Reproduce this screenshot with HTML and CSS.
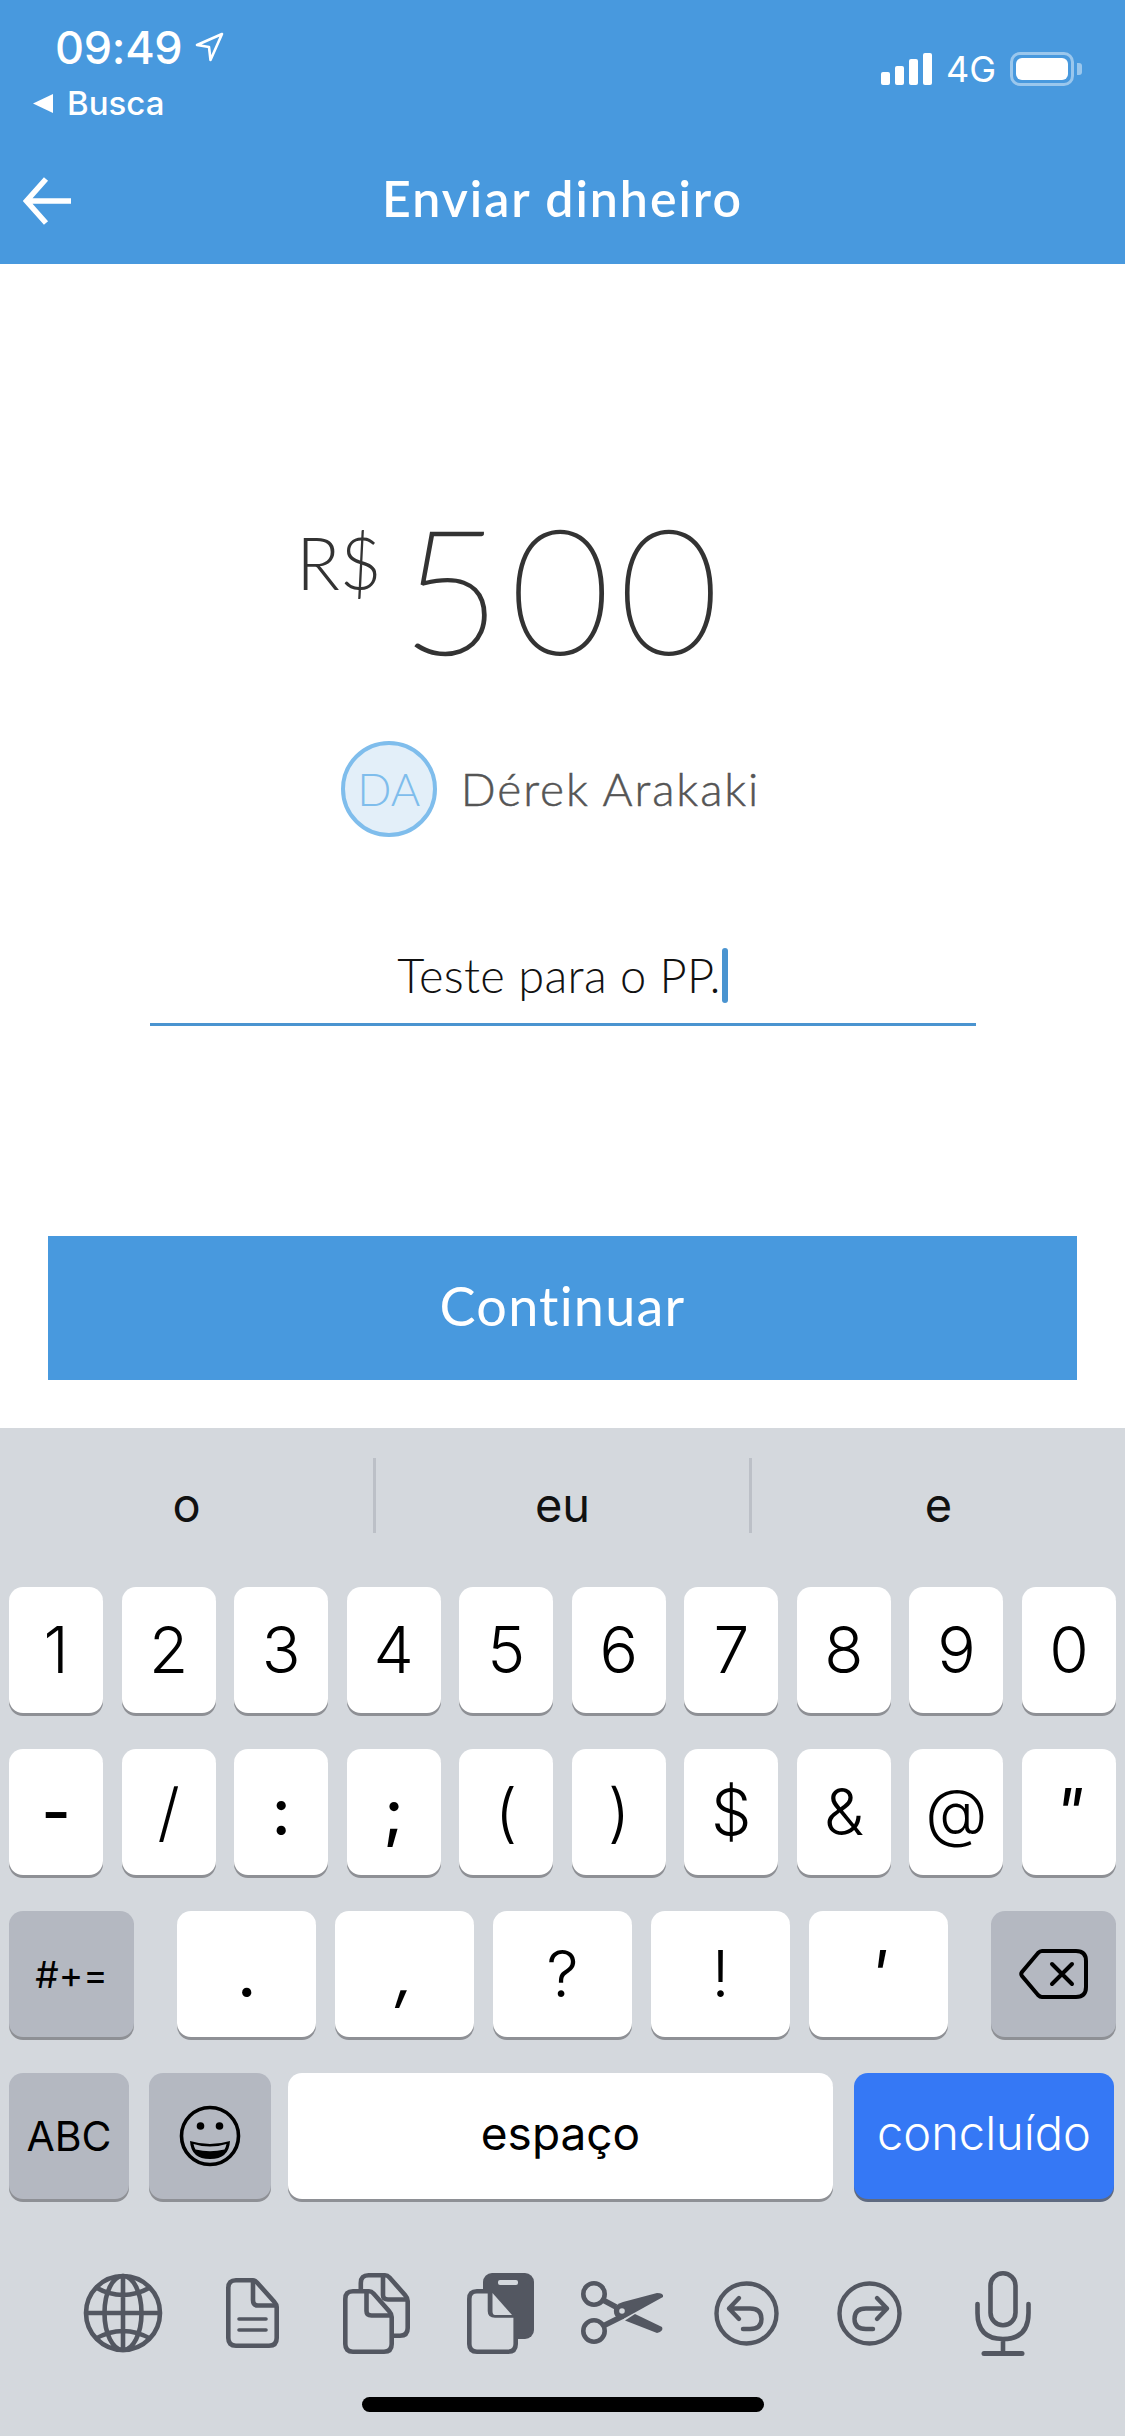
FILE: index.html
```html
<!DOCTYPE html>
<html lang="pt-BR">
<head>
    <meta charset="UTF-8">
    <meta name="viewport" content="width=device-width, initial-scale=1.0">
    <title>Enviar dinheiro</title>
    <link rel="stylesheet" href="styles.css">
</head>
<body>

    <header class="top">
        <div class="status">
            <div class="status-left">
                <div class="clock">
                    <span>09:49</span>
                    <svg class="loc" width="30" height="31" viewBox="0 0 30 31"><path d="M28 2 L3 13 L15 15 L16.5 28 Z" fill="none" stroke="#fff" stroke-width="2.6" stroke-linejoin="round"/></svg>
                </div>
                <div class="back-app">
                    <svg width="22" height="21" viewBox="0 0 22 21"><path d="M21 1 V20 L1 10.5 Z" fill="#fff"/></svg>
                    <span>Busca</span>
                </div>
            </div>
            <div class="status-right">
                <div class="signal"><i class="b1"></i><i class="b2"></i><i class="b3"></i><i class="b4"></i></div>
                <span class="net">4G</span>
                <div class="battery"><div class="battery-level"></div></div>
                <div class="battery-tip"></div>
            </div>
        </div>
        <div class="nav">
            <svg class="nav-back" width="50" height="50" viewBox="0 0 50 50"><path d="M23 3 L3.5 25 L23 47 M3.5 25 H48" fill="none" stroke="#fff" stroke-width="5.5"/></svg>
            <h1>Enviar dinheiro</h1>
        </div>
    </header>

    <main class="send">
        <div class="amount">
            <span class="currency">R$</span>
            <span class="value">500</span>
        </div>
        <div class="person">
            <div class="avatar">DA</div>
            <span class="name">Dérek Arakaki</span>
        </div>
        <div class="message">
            <span>Teste para o PP.</span><i class="caret"></i>
        </div>
        <button class="continue">Continuar</button>
    </main>

    <section class="keyboard">
        <div class="suggestions">
            <span>o</span>
            <span>eu</span>
            <span>e</span>
        </div>

        <div class="row row-ten">
            <div class="key">1</div><div class="key">2</div><div class="key">3</div><div class="key">4</div><div class="key">5</div>
            <div class="key">6</div><div class="key">7</div><div class="key">8</div><div class="key">9</div><div class="key">0</div>
        </div>
        <div class="row row-ten">
            <div class="key heavy">-</div><div class="key">/</div><div class="key heavy">:</div><div class="key heavy">;</div><div class="key">(</div>
            <div class="key">)</div><div class="key">$</div><div class="key">&amp;</div><div class="key">@</div><div class="key slant">"</div>
        </div>
        <div class="row row-mid">
            <div class="key dark small sym">#+=</div>
            <div class="punct">
                <div class="key heavy">.</div><div class="key slant">,</div><div class="key">?</div><div class="key">!</div><div class="key slant">'</div>
            </div>
            <div class="key dark del">
                <svg width="70" height="52" viewBox="0 0 70 52"><path d="M23 3 H57 Q67 3 67 13 V39 Q67 49 57 49 H23 Q21 49 19 47 L3 28 Q1.5 26 3 24 L19 5 Q21 3 23 3 Z" fill="none" stroke="#000" stroke-width="4"/><path d="M33 16 L53 36 M53 16 L33 36" stroke="#000" stroke-width="4" stroke-linecap="round"/></svg>
            </div>
        </div>
        <div class="row row-bottom">
            <div class="key dark small abc">ABC</div>
            <div class="key dark emoji">
                <svg width="62" height="62" viewBox="0 0 62 62"><circle cx="31" cy="31" r="28.5" fill="none" stroke="#000" stroke-width="3.6"/><circle cx="21.5" cy="21" r="3.8"/><circle cx="40.5" cy="21" r="3.8"/><path d="M11 36 Q31 42 51 36 Q50 54 31 54 Q12 54 11 36 Z"/><path d="M14.5 39 Q31 44 47.5 39 Q47 42 45.5 44.5 Q31 48 16.5 44.5 Q15 42 14.5 39 Z" fill="#b4b8c1"/></svg>
            </div>
            <div class="key space">espaço</div>
            <div class="key done">concluído</div>
        </div>

        <div class="tools">
            <svg class="t-globe" width="80" height="80" viewBox="0 0 80 80" fill="none" stroke="#535761" stroke-width="4.6">
                <circle cx="40" cy="40" r="37"/><ellipse cx="40" cy="40" rx="18.5" ry="37"/><path d="M40 3 V77 M3 40 H77 M12 14 Q40 30 68 14 M12 66 Q40 50 68 66"/>
            </svg>
            <svg class="t-doc" width="53" height="70" viewBox="0 0 53 70" fill="none" stroke="#535761" stroke-width="4.6">
                <path d="M10 2.3 H27 Q29 2.3 31 4.5 L48 23.5 Q50.7 26.5 50.7 29 V60 Q50.7 67.7 43 67.7 H10 Q2.3 67.7 2.3 60 V10 Q2.3 2.3 10 2.3 Z"/><path d="M27 2.3 V22 Q27 27.5 32 27.5 H50.7"/>
                <path d="M13 41 H40 M13 52 H40" stroke-width="3.6" stroke-linecap="round"/>
            </svg>
            <svg class="t-copy" width="67" height="81" viewBox="0 0 67 81" fill="none" stroke="#535761" stroke-width="4.6">
                <path d="M25.5 2.3 H42 Q44.5 2.3 46.5 4.5 L62 22 Q64.7 25 64.7 28 V55 Q64.7 62.7 57 62.7 H25.5 Q17.8 62.7 17.8 55 V10 Q17.8 2.3 25.5 2.3 Z" fill="#d4d8dd"/><path d="M40 2.3 V22 Q40 26.5 45 26.5 H64.7"/>
                <path d="M10 18.3 H26 Q28.5 18.3 30.5 20.5 L46 38 Q48.7 41 48.7 44 V71 Q48.7 78.7 41 78.7 H10 Q2.3 78.7 2.3 71 V26 Q2.3 18.3 10 18.3 Z" fill="#d4d8dd"/><path d="M23.5 18.3 V38 Q23.5 42.5 28.5 42.5 H48.7"/>
            </svg>
            <svg class="t-paste" width="67" height="81" viewBox="0 0 67 81" fill="none" stroke="#535761" stroke-width="4.6">
                <rect x="16" y="0" width="51" height="66" rx="9" fill="#535761" stroke="none"/><rect x="31" y="7" width="20" height="5" rx="2" fill="#d4d8dd" stroke="none"/>
                <path d="M10 18.3 H23 V38 Q23 42.5 28 42.5 H48.7 V71 Q48.7 78.7 41 78.7 H10 Q2.3 78.7 2.3 71 V26 Q2.3 18.3 10 18.3 Z" fill="#d4d8dd"/>
                <path d="M25.5 20 L45 42 H28 Q25.5 42 25.5 38 Z" fill="#d4d8dd" stroke="none"/>
            </svg>
            <svg class="t-cut" width="84" height="64" viewBox="0 0 84 64" fill="none" stroke="#535761" stroke-width="4.6">
                <circle cx="13" cy="13" r="10.7"/><circle cx="13" cy="50" r="10.7"/>
                <path d="M22 19 L35 26 M22 45 L42 35" stroke-width="5.5"/>
                <path d="M33 28 Q35 23 42 21 L76 12 Q83 12 82 16 L44 37 Q40 39 36 37 Q32 33 33 28 Z" fill="#535761" stroke="none"/>
                <path d="M54 33 L81 46 Q83 50 76 52 L44 39.5 Z" fill="#535761" stroke="none"/>
                <circle cx="41" cy="30" r="2.8" fill="#d4d8dd" stroke="none"/>
            </svg>
            <svg class="t-undo" width="65" height="65" viewBox="0 0 65 65" fill="none" stroke="#535761" stroke-width="4.4" stroke-linecap="round" stroke-linejoin="round">
                <circle cx="32.5" cy="32.5" r="30"/><path d="M25 17 L15 27.5 L25 38 M15 27.5 H36 Q47.5 27.5 47.5 38 Q47.5 48 36 48 H29"/>
            </svg>
            <svg class="t-redo" width="65" height="65" viewBox="0 0 65 65" fill="none" stroke="#535761" stroke-width="4.4" stroke-linecap="round" stroke-linejoin="round">
                <circle cx="32.5" cy="32.5" r="30"/><path d="M40 17 L50 27.5 L40 38 M50 27.5 H29 Q17.5 27.5 17.5 38 Q17.5 48 29 48 H36"/>
            </svg>
            <svg class="t-mic" width="56" height="85" viewBox="0 0 56 85" fill="none" stroke="#535761" stroke-width="4.6" stroke-linecap="round">
                <rect x="15.5" y="2.3" width="25" height="52" rx="12.5"/><path d="M2.5 33 V42 Q2.5 68 28 68 Q53.5 68 53.5 42 V33 M28 68 V82"/><path d="M9 82.5 H47" stroke-width="5"/>
            </svg>
        </div>
        <div class="home-bar"></div>
    </section>

</body>
</html>
```

FILE: styles.css
```css
/* General styles */
* {
    box-sizing: border-box;
}

body {
    margin: 0;
    width: 1125px;
    height: 2436px;
    overflow: hidden;
    display: flex;
    flex-direction: column;
    background: #fff;
    font-family: 'Lato', 'Liberation Sans', sans-serif;
}

/* Blue header */
.top {
    height: 264px;
    background: #4899de;
    color: #fff;
    display: flex;
    flex-direction: column;
}

.status {
    height: 160px;
    display: flex;
    justify-content: space-between;
    font-family: 'Inter', 'Liberation Sans', sans-serif;
}

.status-left {
    padding: 22px 0 0 32px;
}

.clock {
    display: flex;
    align-items: center;
    padding-left: 23px;
    height: 50px;
    font-size: 45px;
    font-weight: 500;
    letter-spacing: -0.3px;
}

.loc {
    margin-left: 12px;
}

.back-app {
    display: flex;
    align-items: center;
    gap: 13px;
    height: 40px;
    margin-top: 11px;
    font-size: 33px;
    font-weight: 500;
}

.status-right {
    display: flex;
    align-items: center;
    height: 34px;
    margin-top: 52px;
    padding-right: 43px;
}

.signal {
    display: flex;
    align-items: flex-end;
    gap: 5px;
    height: 32px;
}

.signal i {
    width: 9px;
    background: #fff;
    border-radius: 2px;
}

.b1 { height: 13px; }
.b2 { height: 19px; }
.b3 { height: 26px; }
.b4 { height: 32px; }

.net {
    margin-left: 14px;
    font-size: 36px;
}

.battery {
    width: 64px;
    height: 34px;
    margin-left: 14px;
    padding: 3px;
    border: 3px solid rgba(255, 255, 255, 0.45);
    border-radius: 10px;
}

.battery-level {
    width: 100%;
    height: 100%;
    background: #fff;
    border-radius: 6px;
}

.battery-tip {
    width: 5px;
    height: 12px;
    margin-left: 3px;
    background: rgba(255, 255, 255, 0.45);
    border-radius: 0 3px 3px 0;
}

.nav {
    position: relative;
    height: 76px;
    display: flex;
    align-items: center;
    justify-content: center;
}

.nav-back {
    position: absolute;
    left: 23px;
    top: 16px;
}

.nav h1 {
    margin: 0;
    font-size: 50px;
    font-weight: 600;
    line-height: 76px;
    letter-spacing: 2px;
}

/* Amount and recipient */
.send {
    height: 1164px;
    display: flex;
    flex-direction: column;
    align-items: center;
}

.amount {
    display: flex;
    align-items: flex-start;
    height: 180px;
    margin-top: 240px;
    margin-right: 101px;
    color: #333;
    font-weight: 200;
}

.currency {
    font-size: 72px;
    font-weight: 300;
    line-height: 80px;
    margin-top: 18px;
    margin-right: 20px;
}

.value {
    margin-top: -6px;
    font-size: 172px;
    line-height: 180px;
    letter-spacing: 9px;
    -webkit-text-stroke: 2.5px #333;
}

.person {
    display: flex;
    align-items: center;
    gap: 24px;
    margin-top: 57px;
    margin-right: 24px;
}

.avatar {
    width: 96px;
    height: 96px;
    border: 4px solid #7fbdec;
    border-radius: 50%;
    background: #e3eff9;
    color: #7fbdec;
    font-size: 45px;
    font-weight: 300;
    display: flex;
    align-items: center;
    justify-content: center;
}

.name {
    margin-top: -2px;
    font-size: 46px;
    font-weight: 300;
    color: #555;
    letter-spacing: 1.9px;
    -webkit-text-stroke: 0.5px #555;
}

.message {
    width: 826px;
    height: 104px;
    margin-top: 85px;
    border-bottom: 3px solid #4a94d0;
    display: flex;
    align-items: flex-start;
    justify-content: center;
    font-size: 47px;
    font-weight: 300;
    color: #111;
    letter-spacing: 0.3px;
}

.message span {
    line-height: 70px;
    margin-top: 18px;
}

.caret {
    width: 6px;
    height: 55px;
    margin: 26px 0 0 1px;
    background: #4a94d0;
    border-radius: 3px;
}

.continue {
    width: 1029px;
    height: 144px;
    margin-top: 210px;
    padding: 0 0 6px;
    border: none;
    background: #4899de;
    color: #fff;
    font-family: inherit;
    font-size: 54px;
    letter-spacing: 1.2px;
}

/* Keyboard */
.keyboard {
    flex: 1;
    background: #d4d8dd;
    font-family: 'Inter', 'Liberation Sans', sans-serif;
    color: #000;
}

.suggestions {
    height: 159px;
    padding-top: 30px;
    display: flex;
    align-items: flex-start;
}

.suggestions span {
    flex: 1;
    height: 75px;
    font-size: 47px;
    line-height: 94px;
    text-align: center;
    color: #111;
}

.suggestions span + span {
    border-left: 3px solid #bcc0c7;
}

.row {
    height: 129px;
    margin-bottom: 33px;
    padding: 0 9px;
}

.row-ten {
    display: grid;
    grid-template-columns: repeat(10, 1fr);
    column-gap: 18.4px;
}

.row-mid {
    display: flex;
    gap: 43px;
}

.punct {
    flex: 1;
    display: grid;
    grid-template-columns: repeat(5, 1fr);
    column-gap: 18.5px;
}

.sym,
.del {
    width: 125px;
}

.row-bottom {
    display: flex;
}

.abc { width: 120px; }
.emoji { width: 122px; margin-left: 20px; }
.space { width: 545px; margin-left: 17px; }
.done { width: 260px; margin-left: 21px; }

.key {
    height: 126px;
    background: #fff;
    border-radius: 14px;
    box-shadow: 0 3px 0 #8e9095;
    display: flex;
    align-items: center;
    justify-content: center;
    font-size: 64px;
    font-weight: 350;
    line-height: 1;
}

.key.dark {
    background: #b4b8c1;
}

.key.small {
    font-size: 41px;
    font-weight: 400;
}

.key.sym {
    font-size: 37px;
}

.key.space {
    padding-bottom: 6px;
    font-size: 46px;
    font-weight: 400;
}

.key.done {
    padding-bottom: 8px;
    background: #3578f5;
    box-shadow: 0 3px 0 #5f6a80;
    color: #fff;
    font-size: 47px;
    font-weight: 350;
}

.key.heavy {
    font-weight: 500;
}

.key.slant {
    font-style: italic;
    font-weight: 400;
}

/* Tool icons under the keys */
.tools {
    display: flex;
    align-items: center;
    height: 86px;
    margin-top: 68px;
    padding-left: 83px;
}

.t-doc { margin-left: 63px; }
.t-copy { margin-left: 64px; }
.t-paste { margin-left: 57px; }
.t-cut { margin-left: 47px; }
.t-undo { margin-left: 49px; }
.t-redo { margin-left: 58px; }
.t-mic { margin-left: 73px; }

.home-bar {
    width: 402px;
    height: 15px;
    margin: 41px 0 0 362px;
    background: #000;
    border-radius: 8px;
}
```
